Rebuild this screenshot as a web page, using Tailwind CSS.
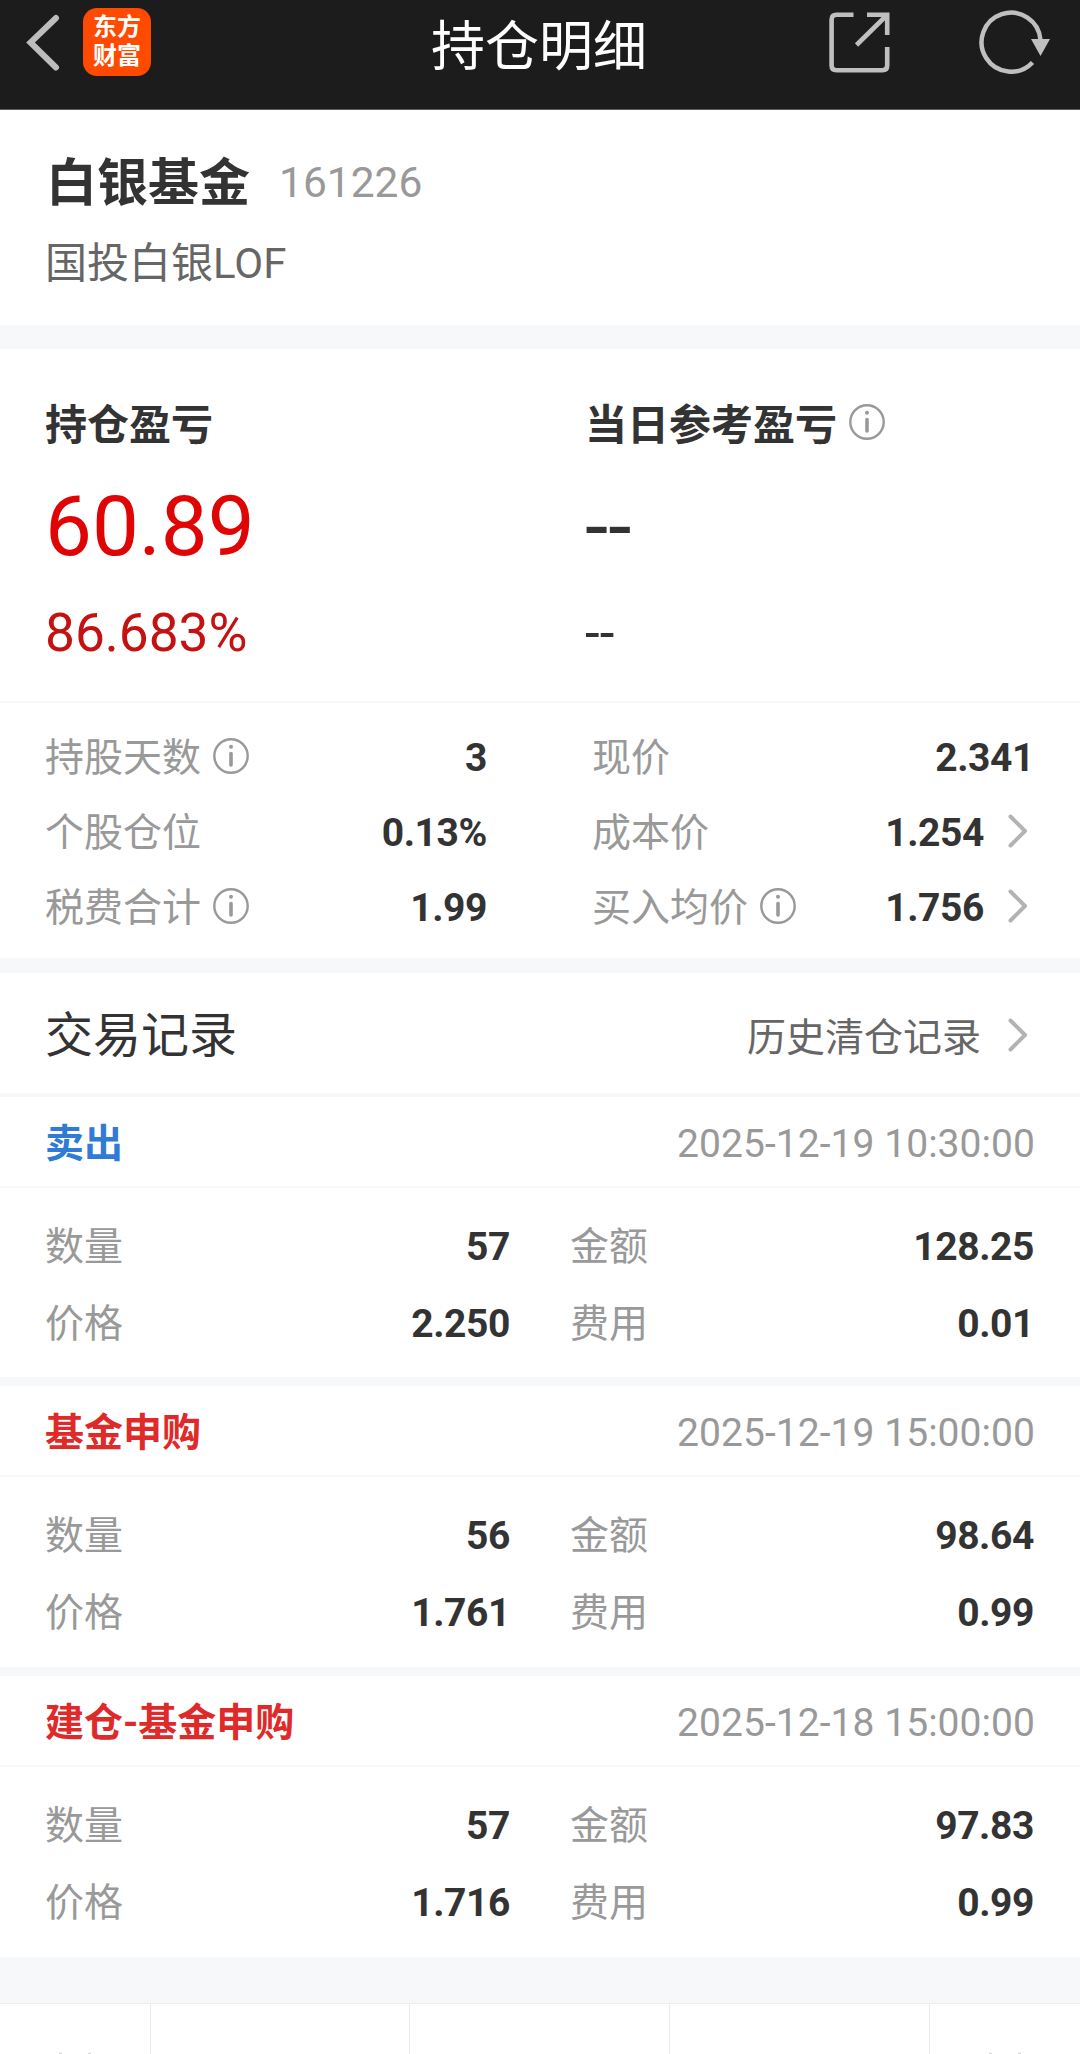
<!DOCTYPE html>
<html lang="zh-CN">
<head>
    <meta charset="UTF-8">
    <title>持仓明细</title>
    <script src="https://cdn.jsdelivr.net/npm/@tailwindcss/browser@4"></script>
</head>
<body class="w-[1080px] h-[2054px] overflow-hidden bg-white text-[#333333] font-['Roboto','Noto_Sans_CJK_SC',sans-serif]">

<svg class="hidden">
    <symbol id="info" viewBox="0 0 36 36">
        <circle cx="18" cy="18" r="16.7" fill="none" stroke="#999" stroke-width="2.4"/>
        <circle cx="18" cy="8.8" r="2" fill="#999"/>
        <path d="M18 15.500v11.500" stroke="#999" stroke-width="3.6" stroke-linecap="round"/>
    </symbol>
    <symbol id="arrow" viewBox="0 0 20 34">
        <path d="M2.5 2.5L17 17L2.5 31.5" fill="none" stroke="#b3b3b3" stroke-width="4" stroke-linecap="round" stroke-linejoin="round"/>
    </symbol>
</svg>

<!-- Header -->
<header class="flex h-[110px] items-start justify-between border-b border-[#5c5c5c] bg-[#1c1c1c]">
    <div class="flex w-[431px] pl-[26px]">
        <svg class="mt-[14px] h-[58px] w-[34px]" viewBox="0 0 34 58">
            <path d="M30 4L4.500 28.500L30 53.500" fill="none" stroke="#bdbdbd" stroke-width="6" stroke-linecap="round"/>
        </svg>
        <div class="mt-2 ml-[23px] flex h-[68px] w-[68px] flex-col items-center justify-center rounded-[14px] bg-[#ff4a00] text-[24px] leading-[29px] font-bold text-white">
            <span>东方</span>
            <span>财富</span>
        </div>
    </div>
    <h1 class="pt-1 text-[54px] leading-[88px] text-white">持仓明细</h1>
    <div class="flex w-[433px] justify-end pr-[28px]">
        <svg class="mt-[10px] h-[64px] w-[64px]" viewBox="0 0 64 64" fill="none" stroke="#bfbfbf" stroke-width="4.600">
            <path d="M26.500 4.700H9.500Q4.600 4.700 4.600 9.500V55.500Q4.600 60.200 9.500 60.200H55.500Q60.200 60.200 60.200 55.500V37"/>
            <path d="M40 4.700H60.200V25M59 6L29.500 35"/>
        </svg>
        <svg class="mt-[6px] ml-[85px] h-[72px] w-[76px]" viewBox="0 0 76 72">
            <path d="M64.500 34A29.500 29.500 0 1 0 56.500 56.500" fill="none" stroke="#bfbfbf" stroke-width="4.500"/>
            <path d="M55 33H74L64.500 50Z" fill="#bfbfbf"/>
        </svg>
    </div>
</header>

<!-- Fund name -->
<section class="h-[215px] px-[46px] pt-[43px]">
    <div class="flex h-[62px] items-center">
        <h2 class="text-[51px] leading-[62px] font-bold">白银基金</h2>
        <span class="ml-[29px] pb-[3px] text-[42.500px] leading-[62px] text-[#999999]">161226</span>
    </div>
    <p class="-ml-px mt-[18px] text-[42px] leading-[62px] text-[#666666]">国投白银LOF</p>
</section>
<div class="h-6 bg-[#f7f8fa]"></div>

<!-- Profit and loss -->
<section class="grid h-[354px] grid-cols-[540px_540px] border-b-2 border-[#f7f7f8] pt-[47px]">
    <div class="pl-[45px]">
        <h3 class="text-[42px] leading-[60px] font-bold">持仓盈亏</h3>
        <p class="mt-[21px] text-[83.500px] leading-[100px] text-[#e00505]">60.89</p>
        <p class="mt-[24px] text-[53.200px] leading-[64px] text-[#c41212]">86.683%</p>
    </div>
    <div class="pl-[45px]">
        <h3 class="flex items-center text-[42px] leading-[60px] font-bold">当日参考盈亏
            <svg class="mb-[9px] ml-3 size-9"><use href="#info"/></svg>
        </h3>
        <p class="mt-[21px] text-[84px] leading-[100px]">--</p>
        <p class="mt-[24px] text-[53px] leading-[64px]">--</p>
    </div>
</section>

<!-- Position details -->
<section class="flex h-[255px] justify-between pt-[18px] pr-[46px] pl-[45px] text-[39px] leading-[75px]">
    <div class="w-[442px]">
        <div class="flex h-[75px] items-center">
            <span class="text-[#999999]">持股天数</span>
            <svg class="mb-[6px] ml-3 size-9"><use href="#info"/></svg>
            <b class="ml-auto tracking-[-0.4px]">3</b>
        </div>
        <div class="flex h-[75px] items-center">
            <span class="text-[#999999]">个股仓位</span>
            <b class="ml-auto tracking-[-0.4px]">0.13%</b>
        </div>
        <div class="flex h-[75px] items-center">
            <span class="text-[#999999]">税费合计</span>
            <svg class="mb-[6px] ml-3 size-9"><use href="#info"/></svg>
            <b class="ml-auto tracking-[-0.4px]">1.99</b>
        </div>
    </div>
    <div class="w-[442px]">
        <div class="flex h-[75px] items-center">
            <span class="text-[#999999]">现价</span>
            <b class="ml-auto tracking-[-0.4px]">2.341</b>
        </div>
        <div class="flex h-[75px] items-center">
            <span class="text-[#999999]">成本价</span>
            <b class="ml-auto tracking-[-0.4px]">1.254</b>
            <svg class="mr-[6px] mb-[6px] ml-6 h-[34px] w-5"><use href="#arrow"/></svg>
        </div>
        <div class="flex h-[75px] items-center">
            <span class="text-[#999999]">买入均价</span>
            <svg class="mb-[6px] ml-3 size-9"><use href="#info"/></svg>
            <b class="ml-auto tracking-[-0.4px]">1.756</b>
            <svg class="mr-[6px] mb-[6px] ml-6 h-[34px] w-5"><use href="#arrow"/></svg>
        </div>
    </div>
</section>
<div class="h-[15px] bg-[#f7f8fa]"></div>

<!-- Trade records -->
<div class="flex h-[120px] items-center pt-[5px] pr-[52px] pl-[45px]">
    <h3 class="mr-auto text-[48px] leading-[72px]">交易记录</h3>
    <span class="pt-[4px] text-[39px] leading-[60px] text-[#666666]">历史清仓记录</span>
    <svg class="ml-[27px] mb-[2px] h-[34px] w-5"><use href="#arrow"/></svg>
</div>
<div class="h-1 bg-[#f7f8fa]"></div>

<section class="h-[280px] text-[39px]">
    <div class="flex h-[91px] items-center justify-between border-b-2 border-[#f9f9fa] px-[45px] pt-[6px]">
        <b class="text-[#2f7bd5]">卖出</b>
        <span class="tracking-[0.05px] text-[#999999]">2025-12-19 10:30:00</span>
    </div>
    <div class="grid grid-cols-[465px_464px] gap-x-[60px] pt-[21px] pl-[45px] leading-[77px]">
        <div class="flex justify-between"><span class="text-[#999999]">数量</span><b class="tracking-[-0.4px]">57</b></div>
        <div class="flex justify-between"><span class="text-[#999999]">金额</span><b class="tracking-[-0.4px]">128.25</b></div>
        <div class="flex justify-between"><span class="text-[#999999]">价格</span><b class="tracking-[-0.4px]">2.250</b></div>
        <div class="flex justify-between"><span class="text-[#999999]">费用</span><b class="tracking-[-0.4px]">0.01</b></div>
    </div>
</section>
<div class="h-[9px] bg-[#f7f8fa]"></div>

<section class="h-[281px] text-[39px]">
    <div class="flex h-[91px] items-center justify-between border-b-2 border-[#f9f9fa] px-[45px] pt-[6px]">
        <b class="text-[#e02a2a]">基金申购</b>
        <span class="tracking-[0.05px] text-[#999999]">2025-12-19 15:00:00</span>
    </div>
    <div class="grid grid-cols-[465px_464px] gap-x-[60px] pt-[21px] pl-[45px] leading-[77px]">
        <div class="flex justify-between"><span class="text-[#999999]">数量</span><b class="tracking-[-0.4px]">56</b></div>
        <div class="flex justify-between"><span class="text-[#999999]">金额</span><b class="tracking-[-0.4px]">98.64</b></div>
        <div class="flex justify-between"><span class="text-[#999999]">价格</span><b class="tracking-[-0.4px]">1.761</b></div>
        <div class="flex justify-between"><span class="text-[#999999]">费用</span><b class="tracking-[-0.4px]">0.99</b></div>
    </div>
</section>
<div class="h-[9px] bg-[#f7f8fa]"></div>

<section class="h-[281px] text-[39px]">
    <div class="flex h-[91px] items-center justify-between border-b-2 border-[#f9f9fa] px-[45px] pt-[6px]">
        <b class="text-[#e02a2a]">建仓-基金申购</b>
        <span class="tracking-[0.05px] text-[#999999]">2025-12-18 15:00:00</span>
    </div>
    <div class="grid grid-cols-[465px_464px] gap-x-[60px] pt-[21px] pl-[45px] leading-[77px]">
        <div class="flex justify-between"><span class="text-[#999999]">数量</span><b class="tracking-[-0.4px]">57</b></div>
        <div class="flex justify-between"><span class="text-[#999999]">金额</span><b class="tracking-[-0.4px]">97.83</b></div>
        <div class="flex justify-between"><span class="text-[#999999]">价格</span><b class="tracking-[-0.4px]">1.716</b></div>
        <div class="flex justify-between"><span class="text-[#999999]">费用</span><b class="tracking-[-0.4px]">0.99</b></div>
    </div>
</section>
<div class="h-[46px] bg-[#f7f8fa]"></div>

<!-- Bottom bar, cut off by the viewport -->
<footer class="grid h-[51px] grid-cols-[151px_259px_260px_260px_150px] items-stretch border-t border-[#eeeeee]">
    <div class="flex items-end gap-[26px] border-r border-[#ececec] pl-[59px]">
        <i class="h-px w-[3px] bg-[#cccccc]"></i>
        <i class="h-px w-[3px] bg-[#cccccc]"></i>
    </div>
    <div class="border-r border-[#ececec]"></div>
    <div class="border-r border-[#ececec]"></div>
    <div class="border-r border-[#ececec]"></div>
    <div class="flex items-end gap-[26px] pl-[59px]">
        <i class="h-px w-[3px] bg-[#cccccc]"></i>
        <i class="h-px w-[3px] bg-[#cccccc]"></i>
    </div>
</footer>
</body>
</html>
